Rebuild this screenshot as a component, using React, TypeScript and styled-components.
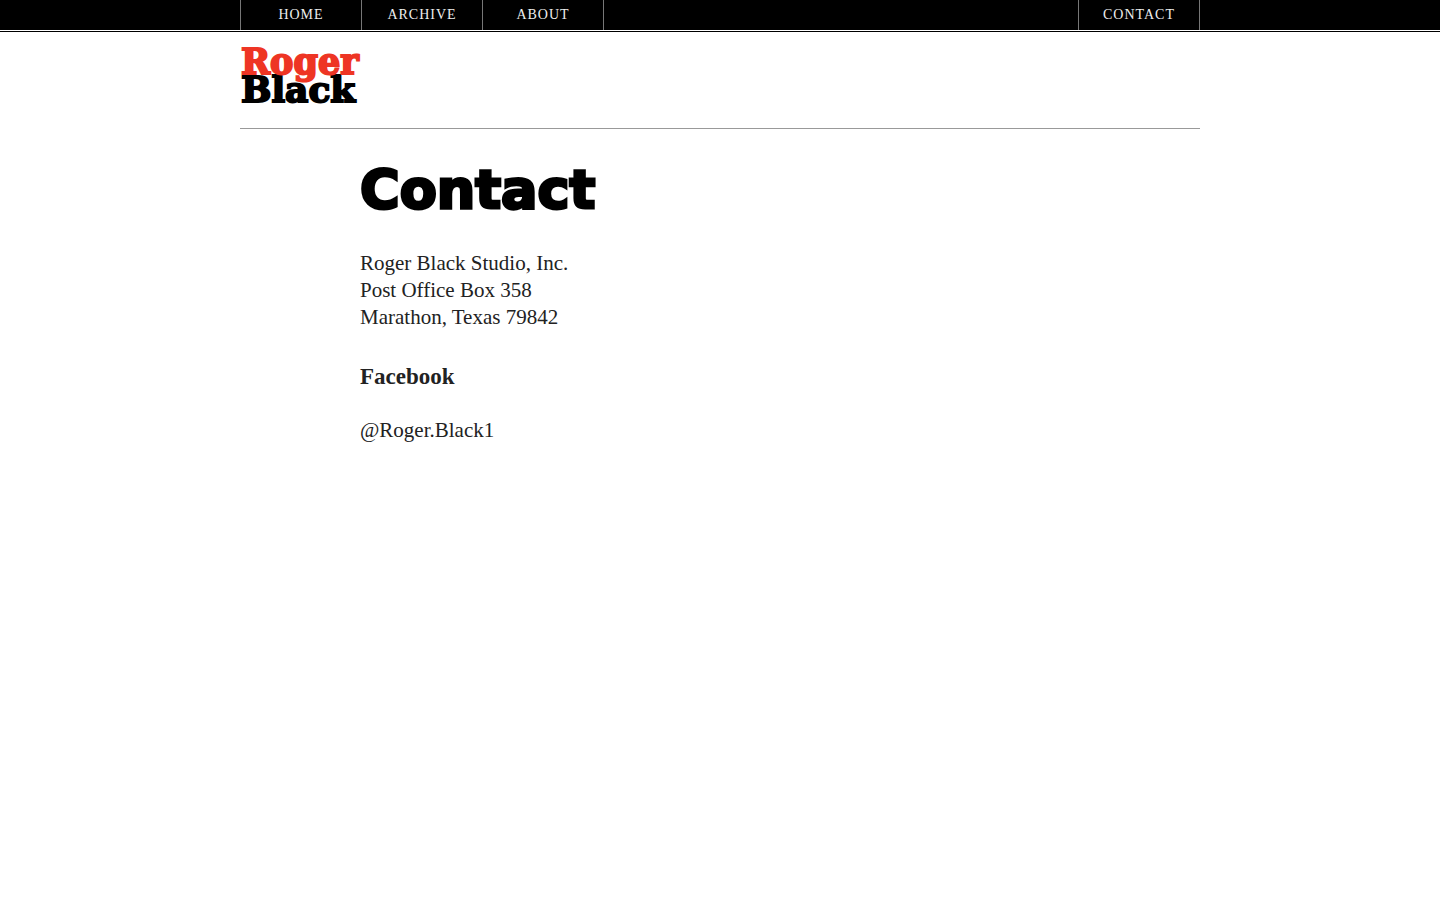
import React from "react";
import styled, { createGlobalStyle } from "styled-components";

const GlobalStyle = createGlobalStyle`
  *, *::before, *::after { box-sizing: border-box; }
  body {
    margin: 0;
    background: #fff;
    color: #222;
    font-family: "Liberation Serif", "Times New Roman", serif;
  }
  h1, h2, p { margin: 0; }
`;

const TopBar = styled.div`
  background: #000;
  border-bottom: 1px solid #fff;
  box-shadow: 0 1px 0 #000;
`;

const Container = styled.div`
  width: 100%;
  max-width: 960px;
  margin: 0 auto;
`;

const Nav = styled.nav`
  display: flex;
  justify-content: space-between;
`;

const NavGroup = styled.div`
  display: flex;
  border-left: 1px solid #777;
`;

const NavLink = styled.a`
  width: 121px;
  height: 30px;
  border-right: 1px solid #777;
  color: #eee;
  font-size: 14px;
  line-height: 29px;
  letter-spacing: 1px;
  text-align: center;
  text-decoration: none;
  text-transform: uppercase;
`;

const Masthead = styled.header`
  padding: 17px 0 24px;
  border-bottom: 1px solid #999;
`;

const LogoLink = styled.a`
  display: block;
  width: 120px;
`;

const LogoArt = styled.svg`
  display: block;
  overflow: visible;
  font-family: "DejaVu Serif", serif;
  font-weight: 700;
  stroke-width: 2px;
  stroke-linejoin: miter;
  stroke-miterlimit: 2;
`;

const Content = styled.main`
  padding: 32px 120px;
`;

const Title = styled.h1`
  color: #000;
  font-family: "DejaVu Sans", sans-serif;
  font-size: 54px;
  font-weight: 700;
  line-height: 57px;
  -webkit-text-stroke: 3px #000;
`;

const Text = styled.p`
  margin-top: 32px;
  font-size: 21px;
  line-height: 27px;
`;

const Subheading = styled.h2`
  margin-top: 32px;
  font-size: 23px;
  line-height: 27px;
`;

const Handle = styled(Text)`
  margin-top: 27px;
`;

const TextLink = styled.a`
  color: inherit;
  text-decoration: none;
`;

function Logo() {
  return (
    <LogoArt width="120" height="56" viewBox="0 0 120 56" role="img" aria-label="Roger Black">
      <text x="1" y="54" fontSize="36" fill="#000" stroke="#000">Black</text>
      <text x="1" y="26" fontSize="35" fill="#ee3524" stroke="#ee3524">Roger</text>
    </LogoArt>
  );
}

export default function App() {
  return (
    <>
      <GlobalStyle />
      <TopBar>
        <Container>
          <Nav>
            <NavGroup>
              <NavLink href="#home">Home</NavLink>
              <NavLink href="#archive">Archive</NavLink>
              <NavLink href="#about">About</NavLink>
            </NavGroup>
            <NavGroup>
              <NavLink href="#contact">Contact</NavLink>
            </NavGroup>
          </Nav>
        </Container>
      </TopBar>
      <Container>
        <Masthead>
          <LogoLink href="#home">
            <Logo />
          </LogoLink>
        </Masthead>
        <Content>
          <Title>Contact</Title>
          <Text>
            Roger Black Studio, Inc.
            <br />
            Post Office Box 358
            <br />
            Marathon, Texas 79842
          </Text>
          <Subheading>Facebook</Subheading>
          <Handle>
            <TextLink href="#facebook">@Roger.Black1</TextLink>
          </Handle>
        </Content>
      </Container>
    </>
  );
}
